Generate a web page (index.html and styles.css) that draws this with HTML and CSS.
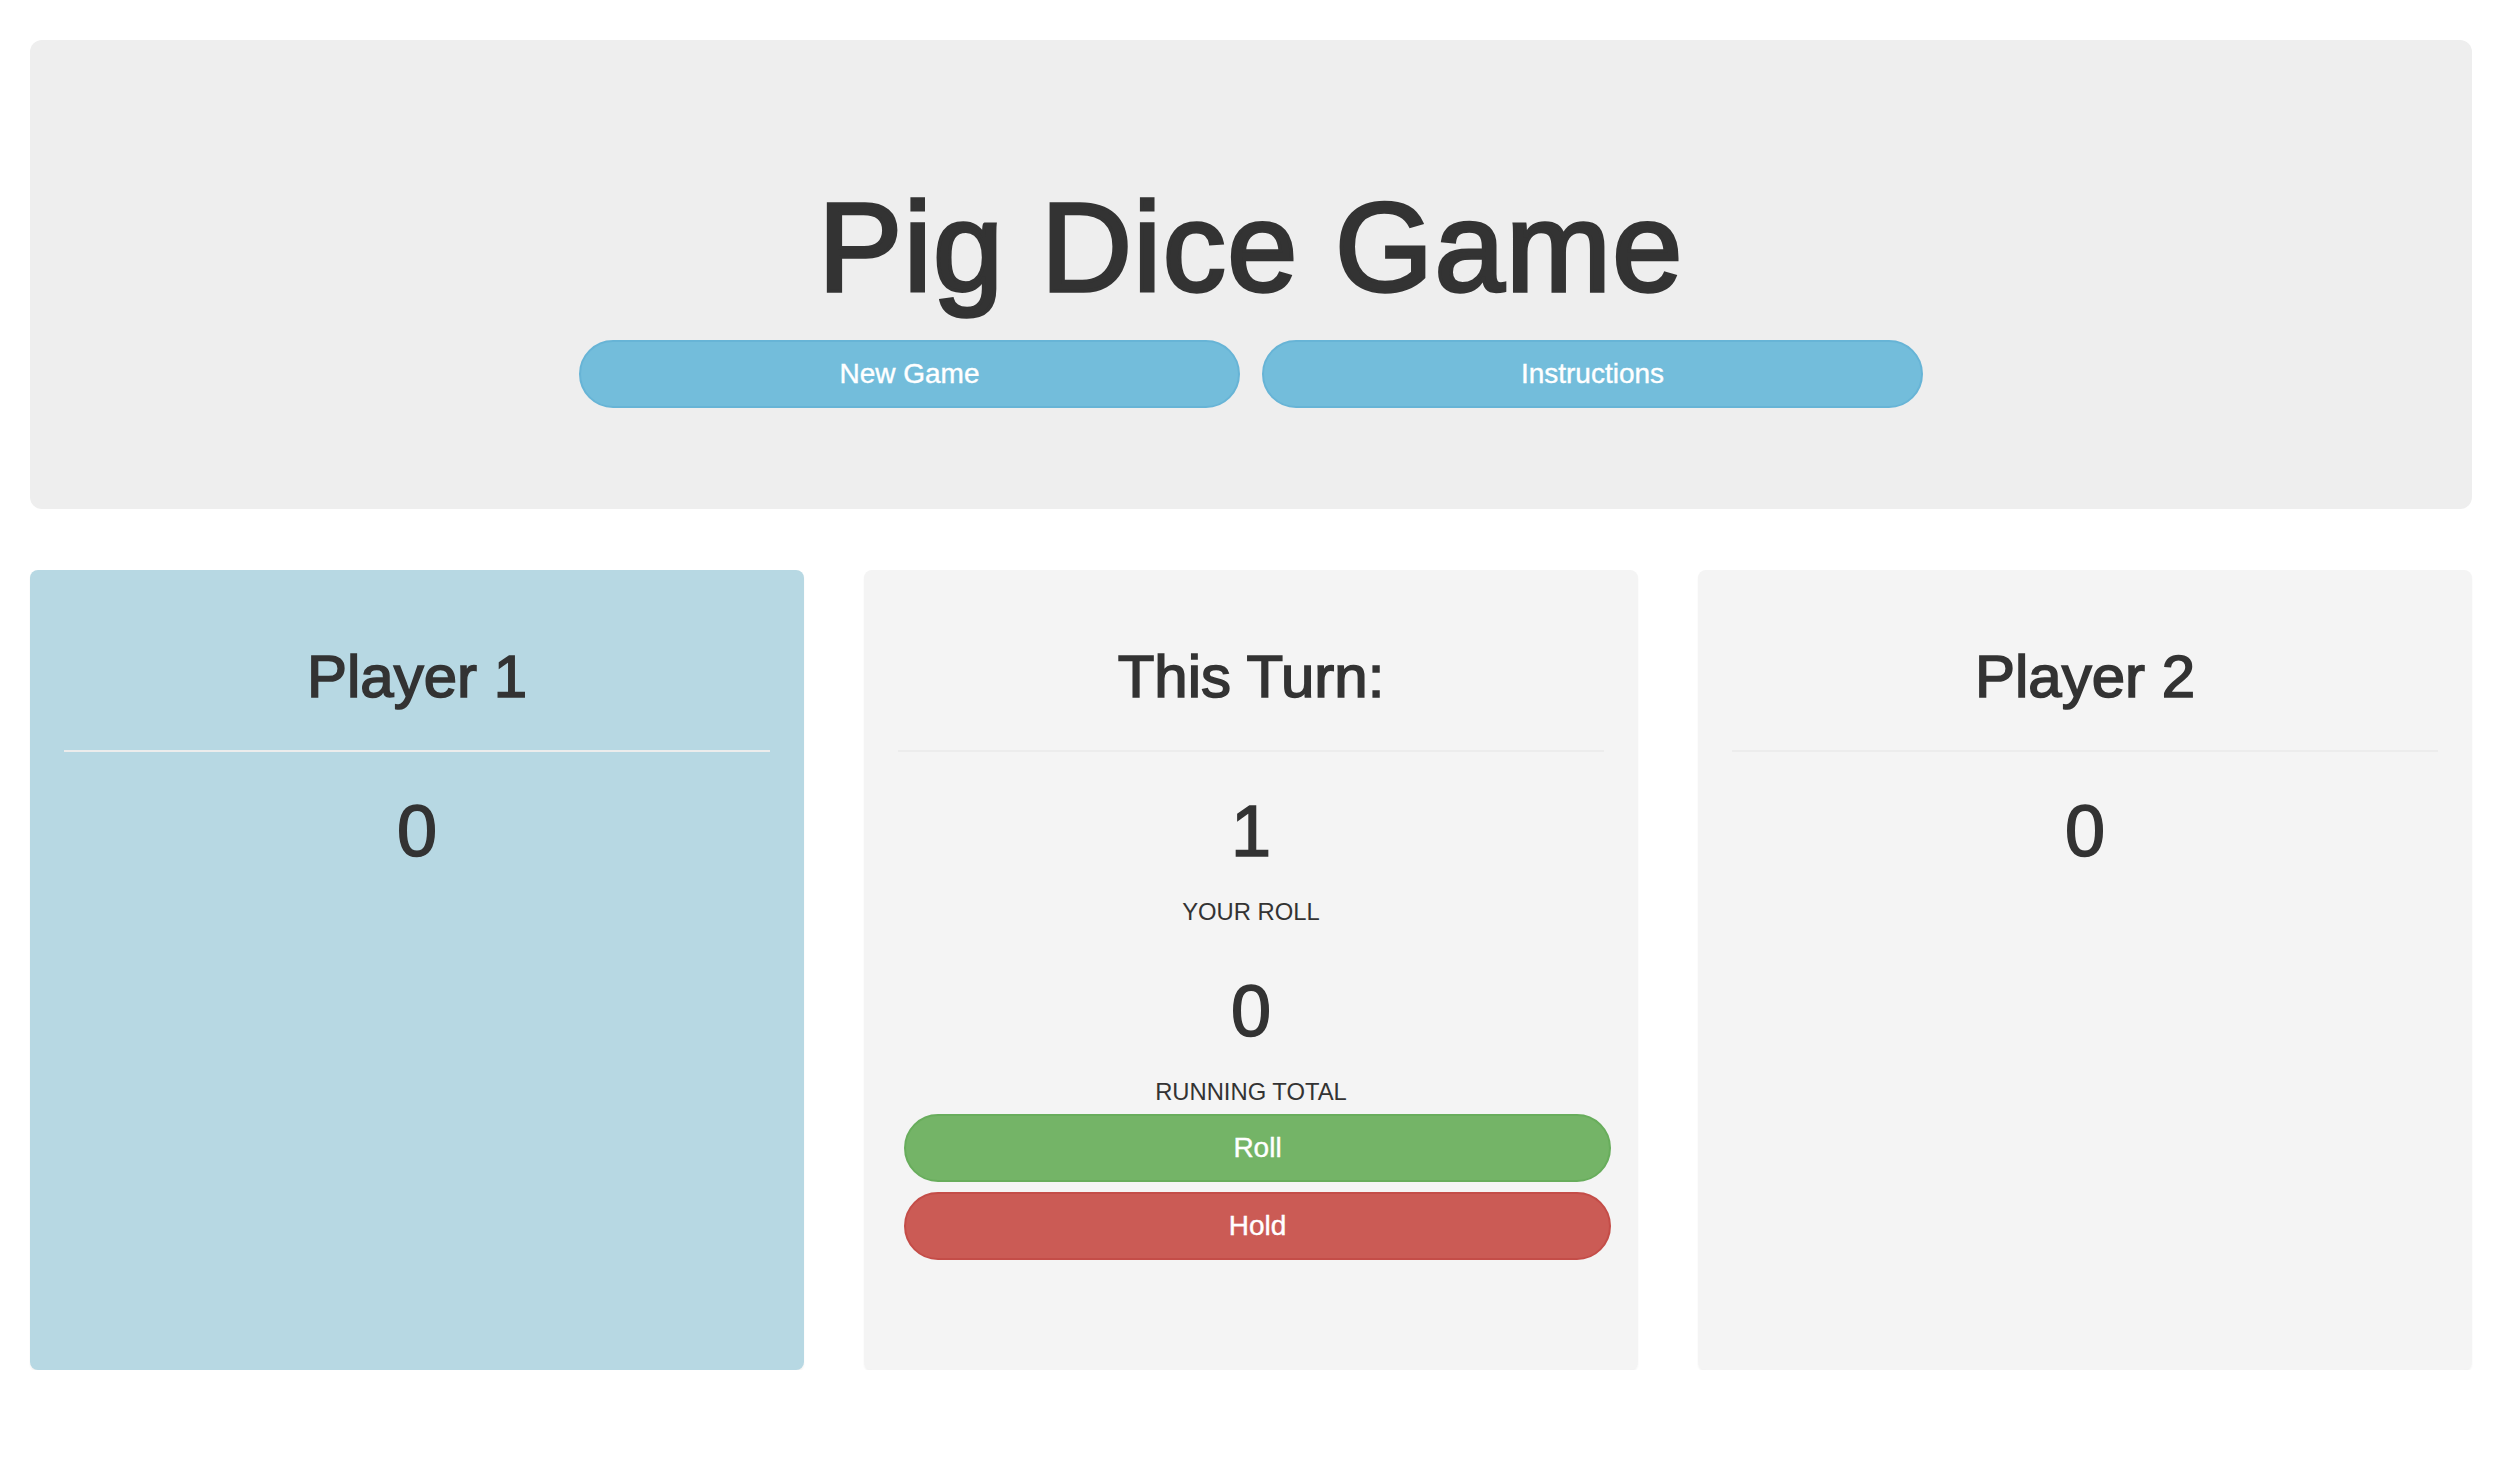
FILE: index.html
```html
<!DOCTYPE html>
<html lang="en">
<head>
<meta charset="utf-8">
<title>Pig Dice Game</title>
<link rel="stylesheet" href="styles.css">
</head>
<body>
<div class="page">
  <header class="jumbotron">
    <h1 class="title">Pig Dice Game</h1>
    <div class="actions">
      <button class="btn btn-info">New Game</button>
      <button class="btn btn-info">Instructions</button>
    </div>
  </header>
  <main class="board">
    <section class="card card-active">
      <h2 class="card-title">Player 1</h2>
      <hr class="divider">
      <h1 class="score">0</h1>
    </section>
    <section class="card">
      <h2 class="card-title">This Turn:</h2>
      <hr class="divider">
      <h1 class="score">1</h1>
      <p class="label"><small>YOUR ROLL</small></p>
      <h1 class="score score-next">0</h1>
      <p class="label"><small>RUNNING TOTAL</small></p>
      <div class="turn-actions">
        <button class="btn btn-success">Roll</button>
        <button class="btn btn-danger">Hold</button>
      </div>
    </section>
    <section class="card">
      <h2 class="card-title">Player 2</h2>
      <hr class="divider">
      <h1 class="score">0</h1>
    </section>
  </main>
</div>
</body>
</html>
```

FILE: styles.css
```css
* {
  box-sizing: border-box;
}

html, body {
  margin: 0;
  padding: 0;
  background: #ffffff;
}

body {
  font-family: "Liberation Sans", Arial, Helvetica, sans-serif;
  font-size: 28px;
  line-height: 40px;
  color: #333333;
}

.page {
  padding: 40px 30px 0 30px;
}

.jumbotron {
  background: #eeeeee;
  border-radius: 12px;
  padding: 96px 0 101px 0;
  margin-bottom: 61px;
  text-align: center;
}

.title {
  font-size: 126px;
  line-height: 138px;
  font-weight: 400;
  letter-spacing: 1.4px;
  -webkit-text-stroke: 3.5px #333333;
  margin: 43px 0 23px 0;
  color: #333333;
}

.actions {
  display: flex;
  justify-content: center;
  gap: 22px;
}

.btn {
  display: block;
  height: 68px;
  border-radius: 34px;
  border: 2px solid transparent;
  font-family: "Liberation Sans", Arial, Helvetica, sans-serif;
  font-size: 28px;
  line-height: 40px;
  color: #ffffff;
  padding: 0 24px;
  text-align: center;
  cursor: pointer;
  -webkit-text-stroke: 0.4px #ffffff;
}

.btn-info {
  width: 661px;
  background: #73bddb;
  border-color: #67b4d6;
}

.btn-success {
  background: #74b467;
  border-color: #68ad5c;
}

.btn-danger {
  background: #cb5b55;
  border-color: #c44d48;
}

.board {
  display: grid;
  grid-template-columns: repeat(3, 1fr);
  gap: 60px;
}

.card {
  height: 800px;
  background: #f4f4f4;
  border-radius: 8px;
  box-shadow: 0 2px 2px rgba(0, 0, 0, 0.05);
  padding: 74px 34px 0 34px;
  text-align: center;
}

.card-active {
  background: #b7d8e3;
}

.card-title {
  font-size: 60px;
  line-height: 66px;
  font-weight: 400;
  -webkit-text-stroke: 1.6px #333333;
  margin: 0;
}

.divider {
  border: 0;
  border-top: 2px solid #ececec;
  margin: 40px 0 40px 0;
  height: 0;
}

.score {
  font-size: 72px;
  line-height: 79px;
  font-weight: 400;
  -webkit-text-stroke: 1.6px #333333;
  margin: 0 0 20px 0;
}

.score-next {
  margin-top: 40px;
}

.label {
  margin: 0;
  font-size: 28px;
  line-height: 40px;
}

.label small {
  font-size: 85%;
}

.turn-actions {
  display: flex;
  flex-direction: column;
  gap: 10px;
  margin: 2px -7px 0 6px;
}

.turn-actions .btn {
  width: 100%;
}
```
